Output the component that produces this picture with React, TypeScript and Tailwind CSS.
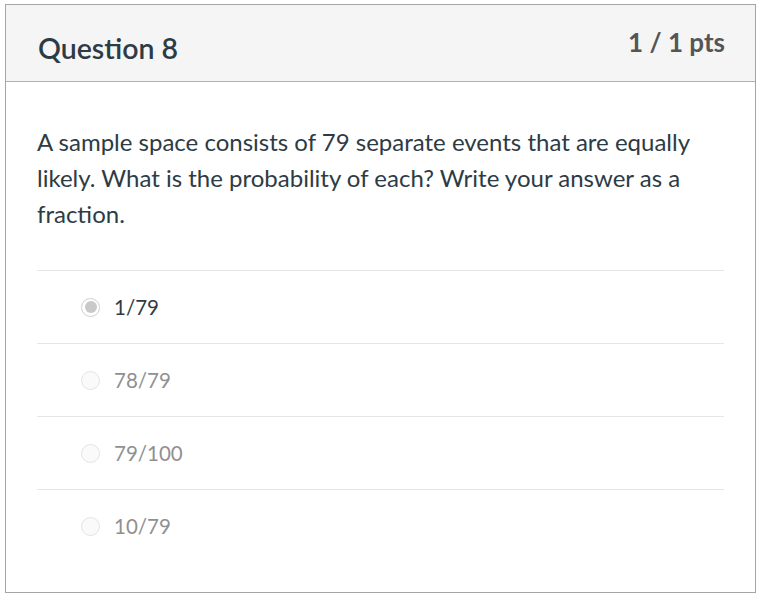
const answers = [
  { label: "1/79", selected: true },
  { label: "78/79", selected: false },
  { label: "79/100", selected: false },
  { label: "10/79", selected: false },
];

function Radio({ selected }: { selected: boolean }) {
  return (
    <span
      className={
        selected
          ? "flex h-[19px] w-[19px] items-center justify-center rounded-full border border-[#d0d0d0] bg-white"
          : "flex h-[19px] w-[19px] items-center justify-center rounded-full border border-[#e4e4e4] bg-[#fafafa]"
      }
    >
      {selected && <span className="h-[12px] w-[12px] rounded-full bg-[#c9c9c9]" />}
    </span>
  );
}

export default function App() {
  return (
    <div className="min-h-screen bg-white pl-[5px] pt-[4px] font-['Lato','Liberation_Sans',sans-serif]">
      <div className="flex h-[589px] w-[751px] flex-col border border-[#a5a5a5]">
        {/* Header */}
        <div className="flex h-[77px] items-start justify-between border-b border-[#b0b0b0] bg-[#f5f5f5] pl-[32px] pr-[30px]">
          <h2 className="mt-[22px] text-[28.5px] font-semibold text-[#2d3b45]">Question 8</h2>
          <span className="mt-[18px] text-[26px] font-bold text-[#555555]">1 / 1 pts</span>
        </div>

        {/* Body */}
        <div className="px-[31px] pt-[42px]">
          <p className="text-[24px] leading-[36px] text-[#2d3b45]">
            A sample space consists of 79 separate events that are equally likely. What is the
            probability of each? Write your answer as a fraction.
          </p>

          <div className="mt-[38px]">
            {answers.map((a) => (
              <div
                key={a.label}
                className="flex h-[73px] items-center gap-[14px] border-t border-[#e6e6e6] pl-[44px]"
              >
                <Radio selected={a.selected} />
                <span
                  className={
                    a.selected
                      ? "text-[20.5px] text-[#2d3b45]"
                      : "text-[20.5px] text-[#909090]"
                  }
                >
                  {a.label}
                </span>
              </div>
            ))}
          </div>
        </div>
      </div>
    </div>
  );
}
